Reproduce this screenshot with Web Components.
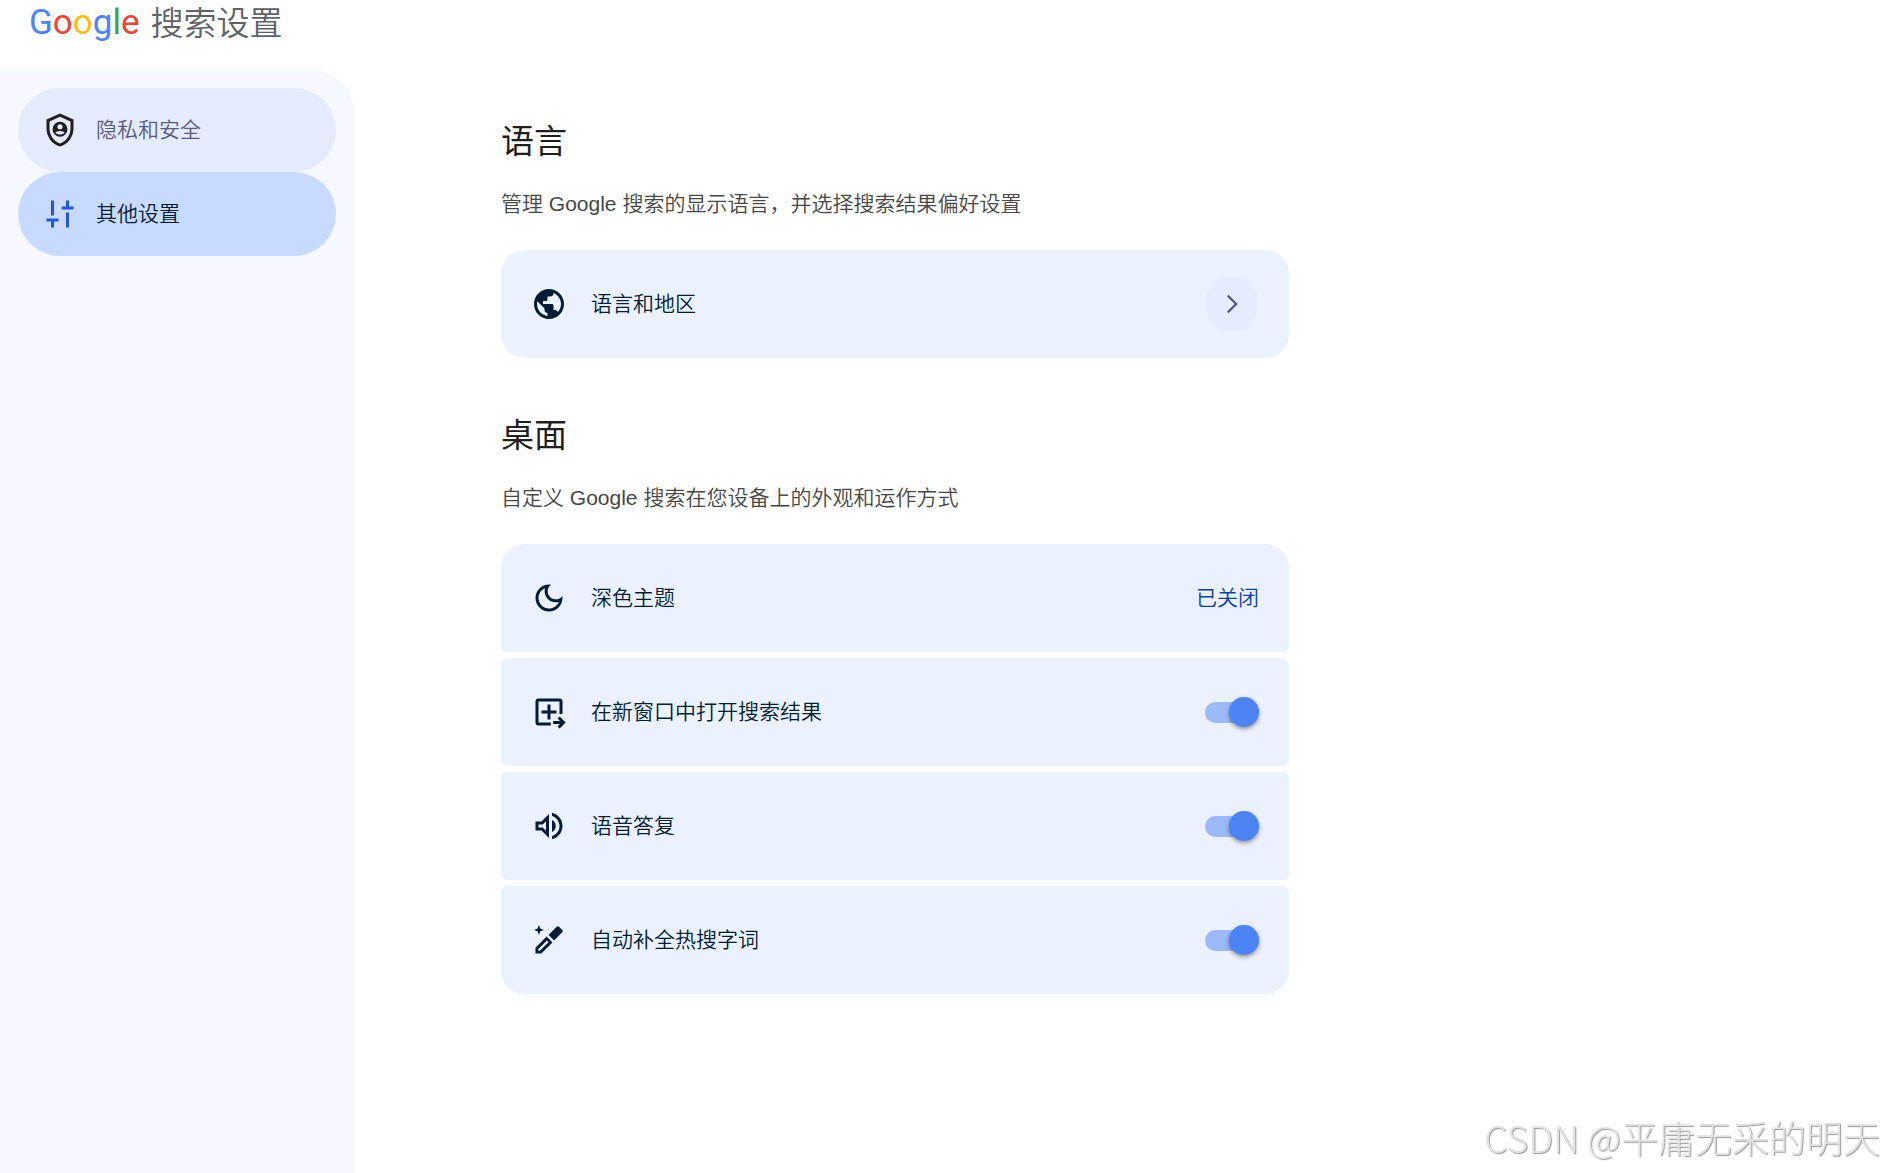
<!DOCTYPE html>
<html lang="zh-CN">
<head>
<meta charset="utf-8">
<meta name="viewport" content="width=device-width, initial-scale=1">
<title>Google 搜索设置</title>
<style>
    body {
        margin: 0;
        background: #fff;
        color: #001d35;
        font: 350 21px/28px "Liberation Sans", "Noto Sans CJK SC", sans-serif;
    }
</style>
</head>
<body>
<settings-page>
    <brand-title slot="header">搜索设置</brand-title>

    <nav-item slot="nav" icon="shield" href="#privacy">隐私和安全</nav-item>
    <nav-item slot="nav" icon="tune" href="#other" active>其他设置</nav-item>

    <settings-section heading="语言" description="管理 Google 搜索的显示语言，并选择搜索结果偏好设置">
        <settings-row icon="globe" type="link" href="#language">语言和地区</settings-row>
    </settings-section>

    <settings-section heading="桌面" description="自定义 Google 搜索在您设备上的外观和运作方式">
        <settings-row icon="moon" type="value" value="已关闭">深色主题</settings-row>
        <settings-row icon="window" type="toggle">在新窗口中打开搜索结果</settings-row>
        <settings-row icon="volume" type="toggle">语音答复</settings-row>
        <settings-row icon="pen" type="toggle">自动补全热搜字词</settings-row>
    </settings-section>
</settings-page>
<page-mark>CSDN @平庸无采的明天</page-mark>

<script>
// Icon bodies, all on a 24x24 grid
const ICONS = {
    shield: `
        <path d="M12 1 3 5v6c0 5.55 3.84 10.74 9 12 5.16-1.26 9-6.45 9-12V5l-9-4zm7 10c0 4.52-2.98 8.69-7 9.93C7.98 19.69 5 15.52 5 11V6.3l7-3.11 7 3.11V11z"/>
        <path fill-rule="evenodd" d="M12 6.5a5 5 0 1 0 0 10 5 5 0 0 0 0-10zm0 1.6a1.7 1.7 0 1 1 0 3.4 1.7 1.7 0 0 1 0-3.4zm0 4.6c1.5 0 2.6.5 3.1 1.1-.7.8-1.8 1.2-3.1 1.2s-2.4-.4-3.1-1.2c.5-.6 1.6-1.1 3.1-1.1z"/>`,
    tune: `
        <path d="M6 3h2v10H6zM3 15h8v2H8v4H6v-4H3zM16 3h2v4h3v2h-8V7h3zM16 11h2v10h-2z"/>`,
    globe: `
        <path d="M12 2C6.48 2 2 6.48 2 12s4.48 10 10 10 10-4.48 10-10S17.52 2 12 2zm-1 17.93c-3.95-.49-7-3.85-7-7.93 0-.62.08-1.21.21-1.79L9 15v1c0 1.1.9 2 2 2v1.93zm6.9-2.54c-.26-.81-1-1.39-1.9-1.39h-1v-3c0-.55-.45-1-1-1H8v-2h2c.55 0 1-.45 1-1V7h2c1.1 0 2-.9 2-2v-.41c2.93 1.19 5 4.06 5 7.41 0 2.08-.8 3.97-2.1 5.39z"/>`,
    moon: `
        <path d="M9.37 5.51c-.18.64-.27 1.31-.27 1.99 0 4.08 3.32 7.4 7.4 7.4.68 0 1.35-.09 1.99-.27C17.45 17.19 14.93 19 12 19c-3.86 0-7-3.14-7-7 0-2.93 1.81-5.45 4.37-6.49zM12 3c-4.97 0-9 4.03-9 9s4.03 9 9 9 9-4.03 9-9c0-.46-.04-.92-.1-1.36-.98 1.37-2.58 2.26-4.4 2.26-2.98 0-5.4-2.42-5.4-5.4 0-1.81.89-3.42 2.26-4.4-.44-.06-.9-.1-1.36-.1z"/>`,
    window: `
        <path fill="none" stroke="currentColor" stroke-width="2" d="M13.2 20H5a1 1 0 0 1-1-1V5a1 1 0 0 1 1-1h14a1 1 0 0 1 1 1v8.4M12 7v10M7 12h10"/>
        <path fill="none" stroke="currentColor" stroke-width="2" d="M14.8 19h6.6M18.4 15.7l3.3 3.3-3.3 3.3"/>`,
    volume: `
        <path d="M3 9v6h4l5 5V4L7 9H3zm7-.17v6.34L7.83 13H5v-2h2.83L10 8.83zM16.5 12A4.5 4.5 0 0 0 14 7.97v8.05A4.47 4.47 0 0 0 16.5 12zM14 3.23v2.06c2.89.86 5 3.54 5 6.71s-2.11 5.85-5 6.71v2.06c4.01-.91 7-4.49 7-8.77s-2.99-7.86-7-8.77z"/>`,
    pen: `
        <path d="m5.3 2 .9 2.4 2.4.9-2.4.9-.9 2.4-.9-2.4L2 5.3l2.4-.9z"/>
        <path d="m11.7 8.6 5.4-5.4c.5-.5 1.1-.5 1.6 0l2.1 2.1c.5.5.5 1.1 0 1.6l-5.4 5.4z"/>
        <path fill-rule="evenodd" d="M3 21v-3.9l7.4-7.4 3.9 3.9L6.9 21zm1.9-1.9h1l5.8-5.6-1.1-1.1-5.7 5.6z"/>`,
    chevron: `
        <path fill="none" stroke="currentColor" stroke-width="1.5" d="m9.2 6.4 5.6 5.6-5.6 5.6"/>`
};

class UiIcon extends HTMLElement {
    constructor() {
        super();
        this.attachShadow({ mode: 'open' });
    }

    connectedCallback() {
        this.shadowRoot.innerHTML = `
            <style>
                :host {
                    display: block;
                    flex: none;
                    width: 36px;
                    height: 36px;
                }

                svg {
                    display: block;
                    fill: currentColor;
                }
            </style>
            <svg width="100%" height="100%" viewBox="0 0 24 24" aria-hidden="true">${ICONS[this.getAttribute('name')] || ''}</svg>
        `;
    }
}

class BrandTitle extends HTMLElement {
    constructor() {
        super();
        this.attachShadow({ mode: 'open' });
    }

    connectedCallback() {
        this.shadowRoot.innerHTML = `
            <style>
                :host {
                    display: flex;
                    align-items: flex-start;
                    gap: 11px;
                    height: 48px;
                    padding: 0 29px;
                    color: #5f6368;
                }

                .logo {
                    font: 400 35px/46px Roboto, sans-serif;
                    color: #4c84f5;
                    text-decoration: none;
                }

                .red { color: #ea4535; }
                .yellow { color: #fbbd12; }
                .green { color: #34a853; }

                h1 {
                    margin: 0;
                    font-size: 33px;
                    line-height: 48px;
                    font-weight: 350;
                }
            </style>
            <a class="logo" href="#home"><span>G</span><span class="red">o</span><span class="yellow">o</span><span>g</span><span class="green">l</span><span class="red">e</span></a>
            <h1><slot></slot></h1>
        `;
    }
}

class NavItem extends HTMLElement {
    constructor() {
        super();
        this.attachShadow({ mode: 'open' });
    }

    connectedCallback() {
        const active = this.hasAttribute('active');
        this.shadowRoot.innerHTML = `
            <style>
                :host {
                    display: block;
                    --icon: #1f1f1f;
                }

                a {
                    display: flex;
                    align-items: center;
                    gap: 18px;
                    height: 84px;
                    padding: 0 24px;
                    box-sizing: border-box;
                    border-radius: 42px;
                    background: #e4ebfb;
                    color: #575b83;
                    text-decoration: none;
                }

                :host([active]) {
                    --icon: #2456d6;
                }

                :host([active]) a {
                    background: #c8daff;
                    color: #001d35;
                }

                ui-icon {
                    color: var(--icon);
                }
            </style>
            <a href="${this.getAttribute('href')}"${active ? ' aria-current="page"' : ''}>
                <ui-icon name="${this.getAttribute('icon')}"></ui-icon>
                <span><slot></slot></span>
            </a>
        `;
    }
}

class SettingsSection extends HTMLElement {
    constructor() {
        super();
        this.attachShadow({ mode: 'open' });
    }

    connectedCallback() {
        this.shadowRoot.innerHTML = `
            <style>
                :host {
                    display: block;
                }

                h2 {
                    margin: 0 0 24px;
                    font-size: 33px;
                    line-height: 48px;
                    font-weight: 400;
                    color: #1f1f1f;
                }

                p {
                    margin: 0 0 32px;
                    color: #474747;
                }

                .rows {
                    display: flex;
                    flex-direction: column;
                    gap: 6px;
                }

                ::slotted(*) {
                    border-radius: 6px;
                }

                ::slotted(:first-child) {
                    border-top-left-radius: 24px;
                    border-top-right-radius: 24px;
                }

                ::slotted(:last-child) {
                    border-bottom-left-radius: 24px;
                    border-bottom-right-radius: 24px;
                }
            </style>
            <section>
                <h2>${this.getAttribute('heading')}</h2>
                <p>${this.getAttribute('description')}</p>
                <div class="rows"><slot></slot></div>
            </section>
        `;
    }
}

class SettingsRow extends HTMLElement {
    constructor() {
        super();
        this.attachShadow({ mode: 'open' });
    }

    connectedCallback() {
        this.shadowRoot.innerHTML = `
            <style>
                :host {
                    display: block;
                    background: #ebf1ff;
                }

                .row {
                    display: flex;
                    align-items: center;
                    gap: 24px;
                    width: 100%;
                    min-height: 108px;
                    padding: 0 30px;
                    box-sizing: border-box;
                    border: 0;
                    border-radius: inherit;
                    background: none;
                    color: inherit;
                    font: inherit;
                    text-align: left;
                    text-decoration: none;
                    cursor: pointer;
                }

                .text {
                    flex: 1;
                }

                .value {
                    color: #0842a0;
                }

                .go {
                    display: grid;
                    place-items: center;
                    width: 54px;
                    height: 54px;
                    border-radius: 50%;
                    background: #e6ecff;
                    color: #575b83;
                }

                input {
                    appearance: none;
                    display: grid;
                    align-items: center;
                    flex: none;
                    width: 54px;
                    height: 30px;
                    margin: 0;
                    cursor: pointer;
                }

                input::before,
                input::after {
                    content: "";
                    grid-area: 1 / 1;
                }

                input::before {
                    height: 21px;
                    border-radius: 11px;
                    background: #bdc1c6;
                }

                input::after {
                    width: 30px;
                    height: 30px;
                    border-radius: 50%;
                    background: #fff;
                    box-shadow: 0 2px 4px rgba(0, 0, 0, .4);
                }

                input:checked::before {
                    background: #9cb9f9;
                }

                input:checked::after {
                    justify-self: end;
                    background: #4c84f5;
                }
            </style>
            ${this.rowMarkup()}
        `;
    }

    rowMarkup() {
        const body = `
            <ui-icon name="${this.getAttribute('icon')}"></ui-icon>
            <span class="text"><slot></slot></span>`;

        switch (this.getAttribute('type')) {
            case 'toggle':
                return `<label class="row">${body}<input type="checkbox" role="switch" checked></label>`;
            case 'link':
                return `<a class="row" href="${this.getAttribute('href')}">${body}<span class="go"><ui-icon name="chevron"></ui-icon></span></a>`;
            default:
                return `<button class="row" type="button">${body}<span class="value">${this.getAttribute('value')}</span></button>`;
        }
    }
}

class SettingsPage extends HTMLElement {
    constructor() {
        super();
        this.attachShadow({ mode: 'open' });
    }

    connectedCallback() {
        this.shadowRoot.innerHTML = `
            <style>
                :host {
                    display: flex;
                    flex-direction: column;
                    min-height: 100vh;
                }

                header {
                    height: 70px;
                }

                .body {
                    display: flex;
                    flex: 1;
                }

                nav {
                    flex: 0 0 354px;
                    box-sizing: border-box;
                    padding: 18px;
                    border-top-right-radius: 42px;
                    background: #f5f8ff;
                }

                main {
                    display: flex;
                    flex-direction: column;
                    gap: 54px;
                    flex: 0 1 788px;
                    margin: 0 24px 0 147px;
                    padding: 48px 0;
                }
            </style>
            <header><slot name="header"></slot></header>
            <div class="body">
                <nav><slot name="nav"></slot></nav>
                <main><slot></slot></main>
            </div>
        `;
    }
}

// Embossed signature in the bottom corner, over the page
class PageMark extends HTMLElement {
    constructor() {
        super();
        this.attachShadow({ mode: 'open' });
    }

    connectedCallback() {
        this.shadowRoot.innerHTML = `
            <style>
                :host {
                    position: fixed;
                    right: 4px;
                    bottom: 12px;
                    font: 300 37px/48px "Noto Sans CJK SC", sans-serif;
                    color: #e2e2e2;
                    text-shadow: 1px 1px 1px #999;
                    white-space: nowrap;
                    pointer-events: none;
                }
            </style>
            <slot></slot>
        `;
    }
}

customElements.define('ui-icon', UiIcon);
customElements.define('brand-title', BrandTitle);
customElements.define('nav-item', NavItem);
customElements.define('settings-section', SettingsSection);
customElements.define('settings-row', SettingsRow);
customElements.define('settings-page', SettingsPage);
customElements.define('page-mark', PageMark);
</script>
</body>
</html>
